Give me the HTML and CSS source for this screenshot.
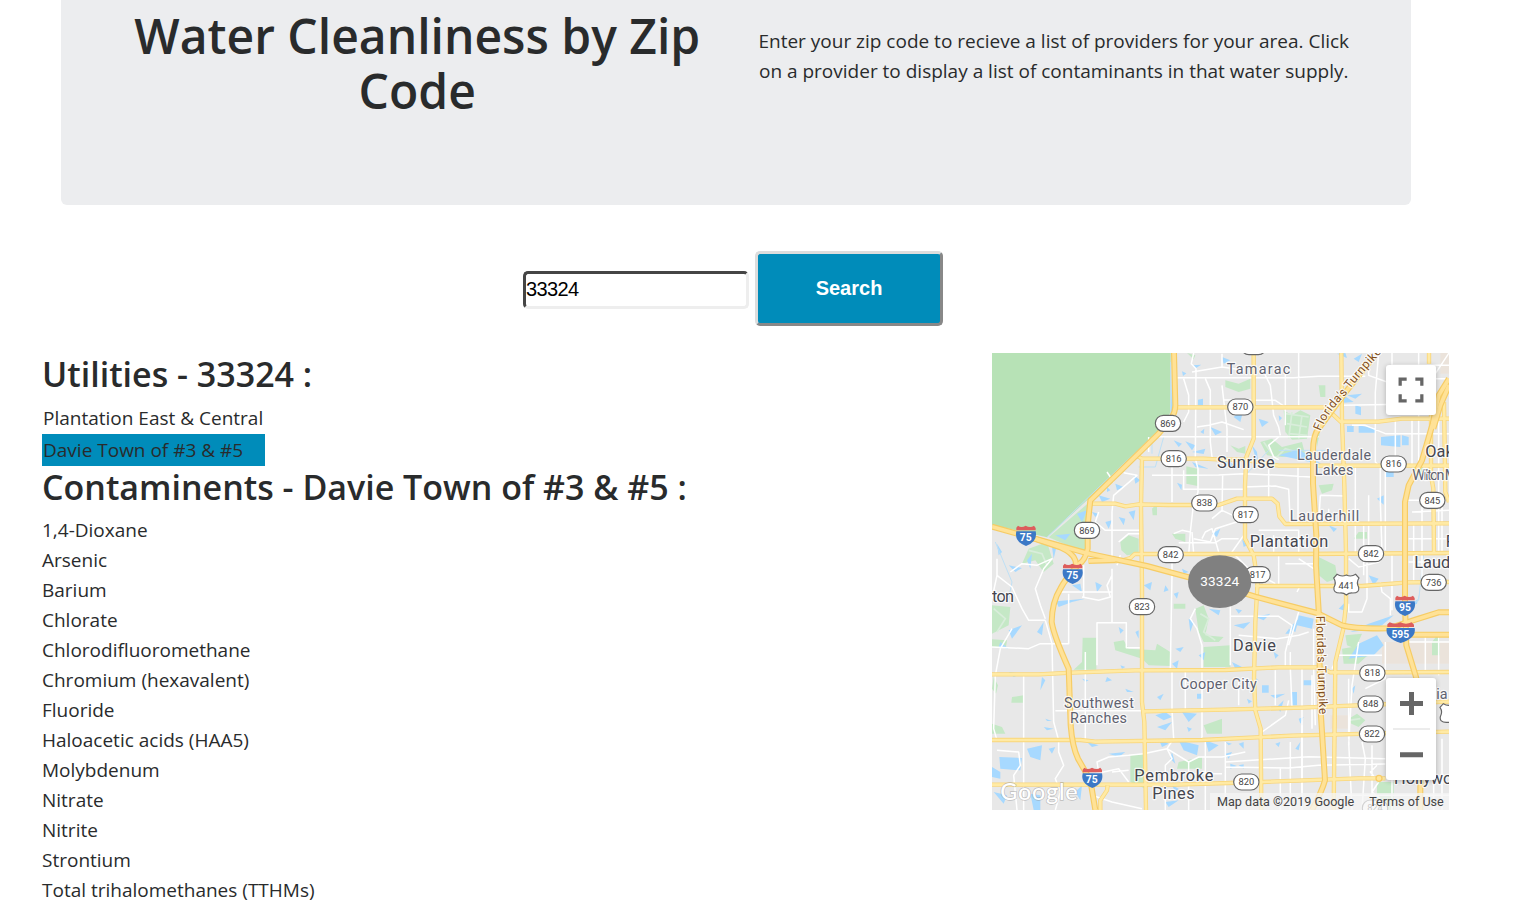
FILE: index.html
```html
<!DOCTYPE html>
<html lang="en">
<head>
<meta charset="utf-8">
<title>Water Cleanliness by Zip Code</title>
<link rel="stylesheet" href="styles.css">
</head>
<body>
<header class="jumbotron">
  <h1 class="title">Water Cleanliness by Zip<br>Code</h1>
  <p class="lead"><span class="l1">Enter your zip code to recieve a list of providers for your area. Click</span><br><span class="l2">on a provider to display a list of contaminants in that water supply.</span></p>
</header>
<form class="search">
  <input class="zip" type="text" value="33324" aria-label="Zip code">
  <button class="go" type="button">Search</button>
</form>
<main class="content">
  <section class="results">
    <h2 class="heading"><span class="h-util">Utilities - 33324 :</span></h2>
    <div class="utilities">
      <div class="utility"><span class="u1">Plantation East &amp; Central</span></div>
      <div class="utility active"><span class="u2">Davie Town of #3 &amp; #5</span></div>
    </div>
    <h2 class="heading"><span class="h-cont">Contaminents - Davie Town of #3 &amp; #5 :</span></h2>
    <ul class="contaminants">
      <li>1,4-Dioxane</li><li>Arsenic</li><li>Barium</li><li>Chlorate</li><li>Chlorodifluoromethane</li><li>Chromium (hexavalent)</li><li>Fluoride</li><li>Haloacetic acids (HAA5)</li><li>Molybdenum</li><li>Nitrate</li><li>Nitrite</li><li>Strontium</li><li>Total trihalomethanes (TTHMs)</li>
    </ul>
  </section>
  <aside class="map">
    <svg class="tiles" viewBox="0 3 1371 1371">
      <defs>
        <g id="arterials">
          <path d="M555 166H1000L1046 209H1160L1230 200H1371"/>
          <path d="M437 313L450 320H590L635 320L690 323H755L860 341H1371"/>
          <path d="M300 455H370L400 463L440 457L530 459H680L735 440H840L857 455L862 493L880 516L1371 514"/>
          <path d="M290 627H385L415 618L428 606H930L1371 603"/>
          <path d="M790 702H1110L1250 691L1371 690"/>
          <path d="M0 967L140 967L240 962L430 955L700 954L860 946H985L1015 961H1165L1371 960"/>
          <path d="M455 1078L700 1073L930 1067L1371 1049"/>
          <path d="M0 1164H265L310 1169L630 1164L900 1151L1371 1139"/>
          <path d="M0 1298H550L810 1290L1100 1279H1180"/>
          <path d="M785 3V260L763 315L759 400V560L785 610L797 690L790 810L786 980L790 1075L806 1130L808 1374"/>
          <path d="M450 320L447 460L450 700V1050L457 1110L462 1374"/>
          <path d="M1048 3L1050 205L1057 400L1062 600V760L1054 830L1030 930L1025 1374"/>
          <path d="M1317 175V370L1324 410L1326 600"/>
          <path d="M1311 3V35M1356 150L1360 420L1371 450"/>
        </g>
        <g id="highways">
          <path d="M546 3L550 160Q550 180 538 200L500 245L295 445L287 520V590Q280 625 262 635Q220 680 205 710Q180 750 179 810Q185 850 230 950L236 1120Q241 1185 258 1220L295 1285L310 1374"/>
          <path d="M0 524L75 545L290 605L465 642L690 703L790 734L975 783L1050 820Q1090 831 1190 829L1270 803L1340 781H1371"/>
          <path d="M125 559L205 586Q243 603 250 625L254 645M290 627L370 624"/>
          <path d="M1145 15L1065 115L980 230Q963 248 963 300V395L973 550L972 640L980 775L985 1060L999 1285Q989 1320 960 1374"/>
          <path d="M1371 80L1340 130L1322 215L1290 325L1250 400L1239 450V760L1243 880L1272 975L1285 1030V1374"/>
          <path d="M1235 848H1371M1371 100L1345 160L1324 230"/>
        </g>
        <g id="route"><rect x="-38" y="-24" width="76" height="48" rx="24" fill="#fff" stroke="#666" stroke-width="3.5"/></g>
        <g id="interstate"><path d="M-29-24L-24-30Q-14-22-1-30Q13-22 24-30L29-23V-16H-29Z" fill="#dd5d5c"/><path d="M-29-13H29Q36 18 0 31Q-36 18-29-13Z" fill="#3b78c6"/></g>
        <g id="interstate-wide"><path d="M-40-25L-33-31Q-16-23-1-31Q16-23 33-31L40-24V-17H-40Z" fill="#dd5d5c"/><path d="M-42-14H42Q48 16 0 31Q-48 16-42-14Z" fill="#3b78c6"/></g>
        <g id="us-route"><path d="M-28-31Q-14-22 0-29Q14-22 28-31L38-20Q29-7 37 8Q40 25 19 25Q8 24 0 31Q-8 24-19 25Q-40 25-37 8Q-29-7-38-20Z" fill="#fff" stroke="#666" stroke-width="3.5"/></g>
      </defs>
      <rect y="3" width="1371" height="1371" fill="#e8e8e8"/>
      <path class="urban" d="M1170 870H1371V935H1170ZM1015 1090H1075V1130H1015ZM1345 3H1371V65H1345Z"/>
      <path class="park" d="M290 452L170 556L250 590L280 600Z"/>
      <path class="everglades" d="M0 3H536V180L495 245L290 440L165 556L0 518Z"/>
      <path class="park" d="M583 343L616 350L617 402L583 395ZM700 85L740 95L775 80V110L740 120L700 105ZM875 175L900 190L925 175L955 190L945 260L900 263L880 240ZM805 270L840 260L870 285L930 270L940 310L870 315L825 310ZM715 280L740 290L760 282V305L735 300ZM970 240L985 235L975 285ZM980 615L1030 640L1036 680L1005 690L975 665ZM385 570L410 550L440 560V605L405 610L388 595ZM110 590L165 570L185 635L155 660L130 625L90 635ZM610 770L635 760L650 800L640 850L695 855L680 870L635 870L620 840ZM365 870L395 865L410 890L490 895L495 875L535 900V942L470 940L450 920L370 895ZM272 857H313V953H245L270 930ZM635 885L715 880V945H635ZM0 760L55 765L50 820L0 845ZM0 862L45 865L42 885H0ZM60 1035L95 1030V1052H58ZM5 975L18 1000L12 1025L0 1010ZM1060 850L1110 845L1090 890L1065 880ZM1050 890L1170 870L1100 935H1055ZM635 1120L690 1100V1145H645ZM560 1230L630 1215V1250H555ZM415 1210L460 1205V1310L415 1290ZM0 1115L30 1125L40 1145H0ZM1070 1100L1095 1085L1120 1105L1100 1125L1078 1115ZM980 100H1000V135H985ZM1265 345L1295 330L1290 370L1265 380ZM1320 870L1343 840V910H1320ZM1155 1290H1205V1374H1155ZM1085 560H1125V540H1100ZM480 470L495 455V490H482ZM540 545H580V570L550 560ZM545 755H580V770H545ZM585 3L610 10L605 22ZM980 400L1025 395L1020 415L990 425Z"/>
      <path class="golf" d="M880 185L950 195M885 215L945 225M890 245L945 250M900 180L890 260M930 190L920 260M815 270L850 320L880 290L930 305M625 785L650 800L635 840L670 865M110 595L150 605L165 640M1070 1105L1105 1100M5 770L40 800L15 840"/>
      <path class="water" d="M540 50L545 180L536 200ZM570 58L583 64L573 72ZM600 40L628 38L612 48ZM618 143L633 140V160H618ZM545 265L570 275L560 285ZM580 268L610 280L600 295ZM600 300L640 290L635 306ZM655 225L690 240L670 250ZM625 240L637 230L635 246ZM555 392L570 398L568 415ZM725 195L755 170L745 210ZM690 15L715 25L695 35ZM800 200L830 210L810 225ZM860 190L870 198L862 207ZM1040 120L1085 150L1055 152ZM1065 130L1110 125L1090 140ZM1090 160L1107 165V190L1090 185ZM1065 222H1085V240H1065ZM1100 220L1150 230V242H1100ZM1167 255L1225 250V285L1167 280ZM1230 250L1250 255V280H1230ZM1180 355L1205 345V375H1182ZM1155 440L1175 430V458ZM1010 520L1035 530L1025 540ZM1035 5L1065 18L1060 3ZM1085 20L1110 5L1100 30ZM860 310L920 292L1010 350L955 330ZM695 315L740 350L700 340ZM600 330L650 350L610 345ZM780 280L795 300L800 350ZM370 395L395 405L375 415ZM425 370L445 385L430 395ZM320 430L355 440L330 450ZM345 405L355 415L345 420ZM190 550L235 545L220 565ZM200 585L240 590L230 610ZM255 485L285 475L270 510ZM300 480L320 485L310 495ZM410 480L430 475L425 505ZM380 495L400 500L395 520ZM340 510L360 505L350 530ZM105 625L120 605L115 650ZM180 585L192 590L185 620ZM15 575L30 600L20 610ZM50 640L90 648L70 660ZM50 835L90 820L60 860ZM135 840L155 810L150 850ZM25 870L50 890L20 885ZM192 748L280 740L240 750L200 765ZM310 690L330 700L315 720ZM240 700L265 695L270 720ZM380 825L395 835L385 845ZM430 840L440 835V860ZM455 700L480 690L475 715ZM520 700L530 715L515 720ZM545 725L560 720L555 740ZM550 890L575 885L565 900ZM540 935L560 925L555 950ZM590 800L605 810L595 840ZM650 770L685 775L680 790ZM730 770L750 775L740 785ZM725 820L775 810L755 830ZM790 795L835 785L815 805ZM890 830L920 800L910 840ZM920 790L965 800L960 830L915 820ZM895 825L880 845H900ZM1075 840L1130 815L1205 790L1170 820L1120 835ZM1100 875L1155 850L1175 880L1145 910L1070 920ZM1235 770L1280 740L1285 710L1275 755ZM1130 670L1160 680L1145 700ZM1040 770L1060 750L1070 780ZM780 970L800 985L790 990ZM810 1000H830V1022H810ZM935 985H960V1000H935ZM835 1030L880 1025L850 1040ZM900 1020H915V1060H900ZM855 1065L875 1045L865 1080ZM495 1035L515 1025L505 1045ZM615 1025H630V1040H615ZM400 1010L425 1020H405ZM385 940L400 945L390 950ZM160 1100L180 1107H165ZM155 1125L185 1130L165 1135ZM22 1215L90 1218L85 1255L25 1250ZM105 1190L150 1180L145 1225L115 1215ZM170 1190L190 1185L180 1205ZM0 1245L25 1260V1280L0 1275ZM5 1320L45 1330L35 1355ZM115 1325L145 1330V1374H125ZM250 1320L270 1300L265 1345ZM350 1205L400 1200L380 1215ZM285 1170L320 1180L300 1185ZM490 1090L520 1080L540 1095L515 1105ZM495 1125L540 1110L520 1135ZM570 1080L615 1085L590 1110ZM585 1125L600 1130L590 1140ZM500 1160L530 1175L510 1185ZM560 1165L620 1180L615 1210L575 1195ZM540 1200L550 1235L535 1220ZM640 1165L680 1180L650 1200ZM540 1300L560 1310L550 1320ZM520 1350L560 1345L530 1365ZM700 1170L720 1175L710 1180ZM700 1205L720 1200L710 1220ZM740 1175L755 1170V1190ZM715 1235L735 1242L715 1250ZM740 1240L755 1237V1250ZM910 1190L925 1170L920 1195ZM850 1175L865 1170L860 1185ZM765 1040L780 1048L770 1055ZM920 1100L935 1095L925 1115ZM1080 1010L1090 1000L1085 1025ZM1125 945L1150 940L1130 955ZM345 975L360 985L340 990ZM270 980L290 985L280 990ZM150 975L160 985L145 1015ZM50 960L90 965L65 975ZM750 560L765 580L755 585ZM570 650L590 660L575 665ZM660 545L685 530L675 555ZM695 640L730 650L710 655ZM845 900L860 910L850 920ZM720 930L750 945L730 950ZM620 910L640 900L635 925Z"/>
      <path class="canal" d="M536 30V200L495 240L290 435L165 556M480 260V305M515 255L490 345H440M860 295H1000M760 370L830 295M0 400M1235 770L1280 745L1295 605M10 570L60 690L50 740"/>
      <g class="minor">
        <path d="M605 3L598 35L612 50L610 320L618 350V420L604 460L595 540M575 80L590 130V180L575 210M640 80L655 115V270L660 315M555 77H905L980 73H1120M615 225L650 220L690 210L755 233M490 254H980M600 60L690 45V5M690 45L755 55M690 100L705 230V300M695 143L785 145H850L880 165L1050 160L1320 155M810 50L835 100L845 190L860 225L865 250M1130 3V70L1185 90M1200 3V40H1371M1160 3L1150 120V330L1165 345V450L1170 600L1155 620M880 60V220M920 3V160M860 255L830 280L845 315L860 323M1080 220H1120L1180 245H1371M1210 200V330M1260 200V340M1340 200V600M1180 345V595M1250 80H1371M1280 3V330M1371 3L1340 50L1300 110"/>
        <path d="M575 355V412H755M540 340V450M470 300V255M360 620V480L365 430L400 400L435 370L395 362M480 370H575L680 369L755 365L870 370L955 375M755 405L850 402L890 412L895 515M830 350V440M918 340V515M985 430L1060 432M985 430L980 515M1090 340V600M1115 515V670M1130 430V600M1010 470V515M660 500L690 475L755 505M690 480L692 370M460 460H560M750 505L670 530L655 570L605 560M630 560L640 540L660 530L680 600M600 540L605 605M545 545L570 535L595 540L590 610M560 572H670L690 560H740M755 550L720 600L770 650L850 695M800 535H920V610M845 550V605M870 560L920 558M920 620L965 650M925 700L915 720M860 610V700M880 635H965M1070 620L1100 645L1160 630L1180 605M1125 605V740L1110 780L1070 780V755M1165 690L1170 720L1195 740V790M1200 600V775M1250 560H1371M1250 630H1371M1265 515V690M1290 450V690M1350 450V600M1245 445H1310M1260 480L1371 475"/>
        <path d="M365 390L345 360M320 480L310 510L340 535H450M380 570L410 545H450M385 610L375 640M540 615V670L535 950M360 650V810M360 670L345 700L355 735L320 745L270 735M192 720H360M275 640V737M315 940V812H403V887H447M230 725V875H145L110 890L0 885M15 620V670L0 740M15 670L60 705L90 770L110 805H160M160 805L180 875M55 660L90 635L135 640L180 620L155 650L130 710L145 760L160 800M60 830L25 890L10 970L5 1130L15 1165M180 875L185 1110L200 1165V1200L215 1240L190 1280L205 1320L190 1374M280 900V1165M190 1076H450M95 965V1374M15 1195L80 1200L85 1240L65 1270L75 1374M540 960V1075M610 770L595 800L615 830L630 880V1160M580 950V1075L635 1070M715 730V940M715 792L860 793L900 820L880 900V950M740 850L855 860L920 850L950 840M920 780L890 880M895 900V950L900 1065M890 1045L880 1090L810 1140M850 955V1060M930 950V1374M965 830V950L970 1120M740 990V1060M960 970V1130M1070 980V1160M1100 870L1080 1000L1070 1180M1180 870V980L1120 1010M1020 950L1040 910H1170M1250 870H1371M1300 850V960M1340 850V970"/>
        <path d="M320 1260L315 1230L350 1215L410 1210L455 1205L525 1190L590 1230L620 1215H690L760 1200M525 1190L545 1160L540 1075M525 1190L540 1220L520 1240V1374M610 1265H690M640 1170V1374M590 1230V1374M310 1265L380 1250L410 1290M300 1330L360 1350L450 1370M360 1260L410 1255M700 1170V1374M700 1230L950 1214L1180 1220M700 1245L890 1248L980 1240L1180 1236M895 1170V1374M865 1250V1374M930 1120V1340M1070 1170L1080 1374M1110 1170L1120 1220L1110 1374M1140 1180V1374M1160 1290L1135 1260L1155 1240M1160 1290L1140 1320L1165 1340M1200 1240V1374M1325 1150V1374M1350 1160V1374M1045 1330H1371"/>
      </g>
      <use href="#arterials" class="road art-case"/><use href="#arterials" class="road art-fill"/>
      <path class="road art-case" d="M347 1300L345 1315L325 1345V1374"/><path class="road art-fill" d="M347 1300L345 1315L325 1345V1374"/>
      <use href="#highways" class="road hwy-case"/><use href="#highways" class="road hwy-fill"/>
      <circle cx="1161" cy="1279" r="9" fill="#ffe69b" stroke="#f7cc68" stroke-width="4"/>
      <g class="shields">
        <use href="#route" x="785" y="-16"/>
        <use href="#route" x="745" y="165"/><text x="745" y="175">870</text>
        <use href="#route" x="528" y="214"/><text x="528" y="224">869</text>
        <use href="#route" x="545" y="320"/><text x="545" y="330">816</text>
        <use href="#route" x="1205" y="336"/><text x="1205" y="346">816</text>
        <use href="#route" x="637" y="453"/><text x="637" y="463">838</text>
        <use href="#route" x="761" y="488"/><text x="761" y="498">817</text>
        <use href="#route" x="1321" y="445"/><text x="1321" y="455">845</text>
        <use href="#route" x="285" y="535"/><text x="285" y="545">869</text>
        <use href="#route" x="536" y="608"/><text x="536" y="618">842</text>
        <use href="#route" x="1137" y="605"/><text x="1137" y="615">842</text>
        <use href="#route" x="797" y="668"/><text x="797" y="678">817</text>
        <use href="#us-route" x="1063" y="698"/><text x="1063" y="710">441</text>
        <use href="#route" x="1325" y="691"/><text x="1325" y="701">736</text>
        <use href="#route" x="450" y="764"/><text x="450" y="774">823</text>
        <use href="#route" x="1141" y="963"/><text x="1141" y="973">818</text>
        <use href="#route" x="1136" y="1056"/><text x="1136" y="1066">848</text>
        <use href="#route" x="1140" y="1146"/><text x="1140" y="1156">822</text>
        <use href="#route" x="763" y="1290"/><text x="763" y="1300">820</text>
        <use href="#us-route" x="1382" y="1086"/>
        <use href="#route" x="1149" y="1368"/><text x="1149" y="1378">824</text>
        <use href="#interstate" x="102" y="551"/><use href="#interstate" x="242" y="665"/><use href="#interstate" x="1239" y="761"/><use href="#interstate" x="301" y="1277"/><use href="#interstate-wide" x="1226" y="842"/>
        <g class="inter"><text x="101" y="567">75</text><text x="241" y="681">75</text><text x="1239" y="777">95</text><text x="299" y="1292">75</text><text x="1225" y="857">595</text></g>
      </g>
      <g class="places">
        <g class="town">
          <text x="704" y="65" textLength="191">Tamarac</text>
          <text x="915" y="324" textLength="222">Lauderdale</text><text x="968" y="369" textLength="116">Lakes</text>
          <text x="1261" y="384" textLength="219">Wilton Manors</text>
          <text x="893" y="506" textLength="209">Lauderhill</text>
          <text x="564" y="1012" textLength="230">Cooper City</text>
          <text x="216" y="1068" textLength="210">Southwest</text><text x="234" y="1114" textLength="171">Ranches</text>
          <text x="1333" y="1042">ia</text>
        </g>
        <g class="city">
          <text x="675" y="347" textLength="173">Sunrise</text>
          <text x="1300" y="314">Oakland</text>
          <text x="773" y="586" textLength="236">Plantation</text>
          <text x="1361" y="586">Fort</text><text x="1267" y="648">Lauderdale</text>
          <text x="0" y="751" textLength="66">ton</text>
          <text x="723" y="897" textLength="129">Davie</text>
          <text x="427" y="1287" textLength="237">Pembroke</text><text x="481" y="1340" textLength="127">Pines</text>
          <text x="1206" y="1297">Hollywood</text>
        </g>
        <g class="turnpike">
          <path id="tp-north" d="M986 238Q1005 185 1060 130Q1105 70 1172 -2" fill="none" stroke="none"/>
          <text><textPath href="#tp-north" textLength="302">Florida's Turnpike</textPath></text>
          <path id="tp-south" d="M973 792L977 940L982 1090" fill="none" stroke="none"/>
          <text><textPath href="#tp-south" textLength="295">Florida's Turnpike</textPath></text>
        </g>
      </g>
      <ellipse cx="683" cy="689" rx="95" ry="79" fill="#808080"/>
      <text class="pin" x="683" y="702" textLength="117">33324</text>
      <text class="google" x="25" y="1344" textLength="232">Google</text>
    </svg>
    <div class="legal"><span class="copy">Map data ©2019 Google</span><span class="terms">Terms of Use</span></div>
    <button class="control fullscreen" type="button" aria-label="Fullscreen">
      <svg viewBox="0 0 24 24"><path d="M2 8V2H8M16 2H22V8M22 16V22H16M8 22H2V16" fill="none" stroke="#666" stroke-width="3"/></svg>
    </button>
    <div class="control zoomer">
      <svg viewBox="0 0 50 102"><path d="M14 25.5H37M25.5 14V37M14 76.7H37" fill="none" stroke="#666" stroke-width="5"/><path d="M7 51H44" stroke="#e6e6e6" stroke-width="1.5"/></svg>
    </div>
  </aside>
</main>
</body>
</html>
```
FILE: styles.css
```css
* { box-sizing: border-box; }
body { margin: 0; height: 906px; overflow: hidden; background: #fff; color: #292b2c; font: 19px/30px "Open Sans", "Noto Sans", sans-serif; }
.jumbotron { display: grid; grid-template-columns: 1fr 1fr; width: 1350px; height: 205px; margin-left: 61px; padding: 0 39px 0 38px; background: #ecedef; border-radius: 0 0 6px 6px; text-align: center; white-space: nowrap; }
.title { margin: 8px 0 0; font-size: 48px; line-height: 55px; font-weight: 600; }
.lead { margin: 26px 0 0; }
.search { display: flex; align-items: center; gap: 6px; height: 75px; margin: 46px 0 0 523px; }
.zip { width: 226px; height: 38px; margin-top: 2px; padding: 0; border: 3px inset #eee; border-color: #999 #eee #eee #999; border-radius: 5px; font: 20px "Liberation Sans", sans-serif; letter-spacing: -.6px; color: #000; }
.go { width: 188px; height: 75px; border: 3px solid; border-color: #ddd #888 #888 #ddd; border-radius: 5px; background: #008cba; color: #fff; font: bold 20px "Liberation Sans", sans-serif; }
.content { display: flex; justify-content: space-between; margin: 27px 82px 0 42px; }
.results { width: 700px; white-space: nowrap; }
.heading { margin: 0; height: 49px; font-size: 34px; line-height: 42px; font-weight: 600; }
.utilities { width: 223px; margin-bottom: 0; }
.utility { height: 32px; padding: 1px; }
.utility.active { background: #008cba; }
.contaminants { margin: 0; padding: 0; list-style: none; }
.map { position: relative; width: 457px; height: 457px; overflow: hidden; font-family: Roboto, sans-serif; }
.tiles { display: block; width: 457px; height: 457px; }
.urban { fill: #ebe3db; }
.everglades { fill: #b7e2b6; }
.park { fill: #c5e8c6; }
.golf { fill: none; stroke: #d9eddb; stroke-width: 5; }
.water { fill: #a7d9ff; }
.canal { fill: none; stroke: #bfe0f5; stroke-width: 3; }
.minor { fill: none; stroke: #fff; stroke-width: 4.5; stroke-linejoin: round; }
.road { fill: none; stroke-linejoin: round; }
.art-case { stroke: #f9d67b; stroke-width: 13; }
.art-fill { stroke: #ffeaa5; stroke-width: 8; }
.hwy-case { stroke: #f6cc65; stroke-width: 18; }
.hwy-fill { stroke: #ffe297; stroke-width: 11; }
.shields text { font: 28px Roboto, sans-serif; fill: #454545; text-anchor: middle; }
.shields .inter text { font-weight: 700; font-size: 31px; fill: #fff; }
.places text { paint-order: stroke; stroke: #fff; stroke-opacity: .8; stroke-width: 7px; stroke-linejoin: round; }
.town text { font-size: 43px; fill: #5f6270; }
.city text { font-size: 49px; fill: #45464f; }
.turnpike text { font-size: 36px; fill: #83501c; }
.pin { font-size: 41px; fill: #fff; text-anchor: middle; }
.google { font: 500 70px Lato, sans-serif; fill: #fff; paint-order: stroke; stroke: #8d8d8d; stroke-opacity: .5; stroke-width: 4px; }
.legal { position: absolute; right: 0; bottom: 0; display: flex; gap: 15px; width: 239px; height: 17px; padding-left: 7px; background: rgba(245,245,245,.75); font-size: 12.6px; line-height: 17px; color: #444; white-space: nowrap; }
.control { position: absolute; left: 394px; width: 50px; border: 0; padding: 0; background: #fff; border-radius: 3px; box-shadow: 0 1px 5px rgba(0,0,0,.25); }
.control svg { display: block; }
.fullscreen { top: 12px; height: 50px; }
.fullscreen svg { width: 26px; height: 26px; margin: auto; }
.zoomer { top: 325px; height: 102px; }
```
